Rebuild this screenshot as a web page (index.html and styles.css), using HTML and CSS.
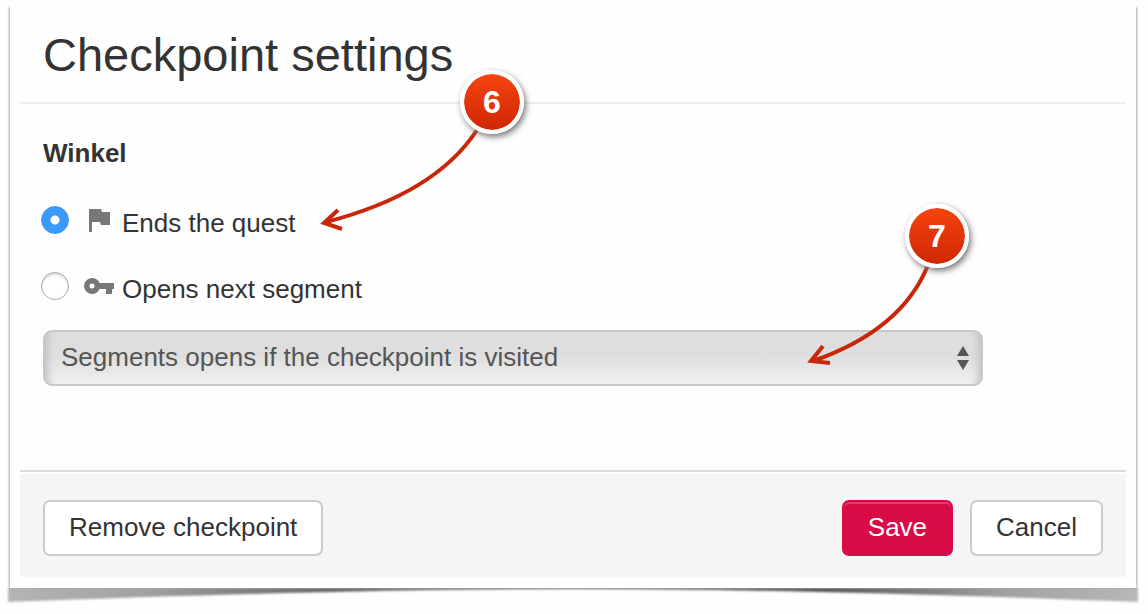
FILE: index.html
```html
<!DOCTYPE html>
<html lang="en">
<head>
<meta charset="utf-8">
<title>Checkpoint settings</title>
<link rel="stylesheet" href="styles.css">
</head>
<body>
<main class="stage">
  <form class="sheet">
    <header class="header"><h1 class="title">Checkpoint settings</h1></header>
    <section class="content">
      <h2 class="name" id="name">Winkel</h2>
      <div class="options" role="radiogroup" aria-labelledby="name">
        <label class="option">
          <input class="radio" type="radio" name="action" checked>
          <svg class="icon" viewBox="0 0 30 30" aria-hidden="true"><path d="M5 4h12l1 3h8v13H17l-1-3H8v10H5z"/></svg>
          <span class="option-text">Ends the quest</span>
        </label>
        <label class="option">
          <input class="radio" type="radio" name="action">
          <svg class="icon" viewBox="0 0 30 30" aria-hidden="true"><path fill-rule="evenodd" d="M15.500 12H30v6h-2v5h-6v-5h-6.500A8 8 0 1 1 15.500 12zM8 12.500a2.500 2.500 0 1 0 0 5a2.500 2.500 0 0 0 0-5z"/></svg>
          <span class="option-text">Opens next segment</span>
        </label>
      </div>
      <div class="select-wrap">
        <select class="select" aria-label="Segment condition"><option>Segments opens if the checkpoint is visited</option></select>
        <svg class="select-arrows" viewBox="0 0 12 24" aria-hidden="true"><path d="M0 10L6 0l6 10zM0 14h12L6 24z"/></svg>
      </div>
    </section>
    <footer class="footer">
      <button class="button" type="button">Remove checkpoint</button>
      <div class="actions">
        <button class="button primary" type="submit">Save</button>
        <button class="button" type="button">Cancel</button>
      </div>
    </footer>
  </form>
  <svg class="curl" viewBox="0 0 1148 26" preserveAspectRatio="none" aria-hidden="true">
    <defs>
      <linearGradient id="edge"><stop offset="0" stop-color="#b4b4b4"/><stop offset=".12" stop-color="#a2a2a2"/><stop offset=".28" stop-color="#666"/><stop offset=".5" stop-color="#777"/><stop offset=".72" stop-color="#555"/><stop offset=".88" stop-color="#a0a0a0"/><stop offset="1" stop-color="#b8b8b8"/></linearGradient>
      <filter id="soft" x="-2%" y="-50%" width="104%" height="200%"><feGaussianBlur stdDeviation="1"/></filter>
    </defs>
    <path fill="url(#edge)" filter="url(#soft)" d="M8-4H1138V14Q800 1 574 1T8 14z"/>
  </svg>
  <div class="callout six">
    <svg class="arrow" viewBox="0 0 230 180" aria-hidden="true"><path d="M177 70Q135 134 26 162M38 150L24 163L42 169"/></svg>
    <span class="badge">6</span>
  </div>
  <div class="callout seven">
    <svg class="arrow" viewBox="0 0 230 180" aria-hidden="true"><path d="M183 71Q157 136 68 167M78 152L66 167L85 169"/></svg>
    <span class="badge">7</span>
  </div>
</main>
</body>
</html>
```

FILE: styles.css
```css
* { box-sizing: border-box; }
body {
  margin: 0;
  background: #fefefe;
  color: #333;
  font-family: "Liberation Sans", Arial, sans-serif;
  font-size: 26px;
  line-height: 30px;
}
.stage { position: relative; padding-top: 5px; overflow: hidden; }
.sheet {
  position: relative;
  z-index: 1;
  margin: 0 12px 0 10px;
  padding: 0 10px 11px;
  background: #fefefe;
  box-shadow: -2px 1px 2px -1px #aaa, 2px 1px 2px -1px #aaa;
}
.header { padding: 22px 23px 19px; border-bottom: 2px solid #ededed; }
.title { margin: 0; font-size: 47px; font-weight: 400; line-height: 56px; }
.content { padding: 34px 23px 84px; }
.name { margin: 0 0 34px; font-size: 26px; line-height: 30px; }
.options { display: grid; gap: 30px; margin: 0 0 26px -2px; }
.option { display: flex; align-items: center; height: 36px; }
.option-text { padding: 6px 0 0 8px; }
.radio {
  appearance: none;
  width: 28px;
  height: 28px;
  margin: 0 15px 0 0;
  border: 1px solid #aaa;
  border-radius: 50%;
  background: #fff;
  box-shadow: inset 0 2px 2px #ddd;
}
.radio:checked {
  border-color: #3895fa;
  background: radial-gradient(circle, #fff 4px, #3b99fc 5px);
  box-shadow: none;
}
.icon { width: 30px; height: 30px; fill: #777; }
.select-wrap { position: relative; max-width: 940px; }
.select {
  appearance: none;
  display: block;
  width: 100%;
  height: 56px;
  padding: 0 40px 2px 16px;
  border: 2px solid #c8c8c8;
  border-radius: 9px;
  background: linear-gradient(#dedede 45%, #f0f0f0);
  box-shadow: inset 10px 0 7px -7px #c2c2c2, inset -10px 0 7px -7px #c2c2c2;
  color: #555;
  font: inherit;
}
.select-arrows {
  position: absolute;
  right: 14px;
  top: 16px;
  width: 12px;
  height: 24px;
  fill: #555;
  pointer-events: none;
}
.footer {
  display: flex;
  justify-content: space-between;
  padding: 28px 23px 21px;
  border-top: 2px solid #ddd;
  background: #f5f5f5;
  box-shadow: inset 0 2px #fff;
}
.actions { display: flex; gap: 17px; }
.button {
  height: 56px;
  padding: 0 24px 2px;
  border: 2px solid #ccc;
  border-radius: 7px;
  background: #fff;
  color: #333;
  font: inherit;
}
.primary {
  border-color: #c90c44 #d90b47 #d90b47;
  background: #d90b47;
  box-shadow: inset 0 2px #e13a6b;
  color: #fff;
}
.curl { display: block; width: 100%; height: 26px; }
.callout {
  position: absolute;
  z-index: 2;
  width: 230px;
  height: 180px;
  pointer-events: none;
}
.six { left: 300px; top: 60px; }
.seven { left: 745px; top: 194px; }
.arrow { position: absolute; inset: 0; fill: none; stroke: #c9270b; stroke-width: 4; }
.badge {
  position: absolute;
  left: 160px;
  top: 10px;
  width: 64px;
  height: 64px;
  border: 4px solid #fff;
  border-radius: 50%;
  background: linear-gradient(#fa4610, #cc2404) border-box;
  background-clip: padding-box;
  box-shadow: 2px 3px 6px #777;
  color: #fff;
  font-size: 32px;
  font-weight: 700;
  line-height: 56px;
  text-align: center;
}
```
